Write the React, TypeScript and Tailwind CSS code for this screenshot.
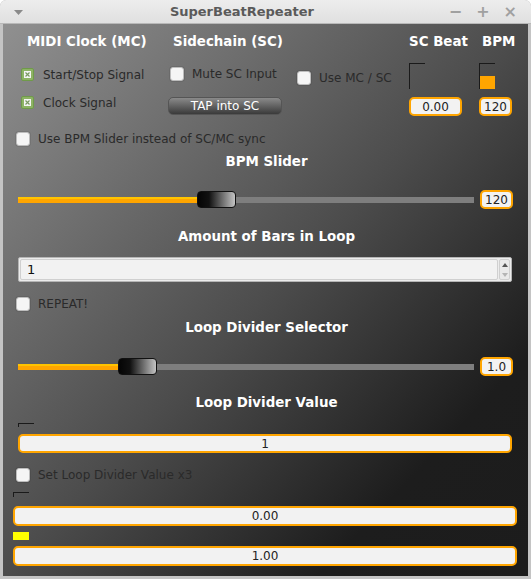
import React from "react";

const font = { fontFamily: '"DejaVu Sans", Verdana, sans-serif' };

function CheckedBox() {
  return (
    <div className="w-[13px] h-[13px] rounded-[2px] bg-[#8db364] border border-[#6f9a4a] flex items-center justify-center shrink-0">
      <div className="w-[7px] h-[7px] bg-[#f4f4f4] flex items-center justify-center">
        <svg width="5" height="5" viewBox="0 0 5 5">
          <path d="M0.5 0.5 L4.5 4.5 M4.5 0.5 L0.5 4.5" stroke="#7a9a60" strokeWidth="1.2" />
        </svg>
      </div>
    </div>
  );
}

function EmptyBox() {
  return (
    <div className="w-[14px] h-[14px] rounded-[3px] bg-[#f5f5f5] border border-[#bdbdbd] shadow-[0_0_0_1px_rgba(0,0,0,0.08)] shrink-0" />
  );
}

function Header({ children, className = "" }: { children: React.ReactNode; className?: string }) {
  return (
    <div className={"text-white font-bold text-[13.4px] leading-[16px] whitespace-nowrap " + className}>{children}</div>
  );
}

function ValueBox({ children, className = "" }: { children: React.ReactNode; className?: string }) {
  return (
    <div
      className={
        "border-2 border-[#ffa500] rounded-[5px] bg-[#f2f2f2] flex items-center justify-center text-[12px] text-[#222] shrink-0 " +
        className
      }
    >
      {children}
    </div>
  );
}

function Slider({ fill }: { fill: number }) {
  return (
    <div className="relative w-[456px] h-[19px] flex items-center shrink-0">
      <div className="w-full h-[6px] bg-[#7e7e7e] flex">
        <div className="h-[6px] flex flex-col" style={{ width: fill }}>
          <div className="h-[2px] bg-[#ffc400]" />
          <div className="h-[4px] bg-[#ffa500]" />
        </div>
      </div>
      <div
        className="absolute top-[1px] w-[39px] h-[17px] rounded-[4px] bg-[linear-gradient(to_right,#050505_0%,#111_30%,#c4c4c4_100%)] border border-[#111]"
        style={{ left: fill - 1 }}
      />
    </div>
  );
}

export default function App() {
  return (
    <div className="w-[531px] h-[579px] bg-[#c4c4c4] rounded-t-[6px] flex flex-col px-[3px] pb-[3px] overflow-hidden" style={font}>
      {/* Title bar */}
      <div className="h-[24px] shrink-0 bg-[linear-gradient(#ededed,#e0e0e0)] -mx-[3px] px-[14px] flex items-center rounded-t-[6px] border-b border-[#b8b8b8]">
        <svg width="9" height="5" viewBox="0 0 9 5" className="mt-[1px]">
          <path d="M0 0 H9 L4.5 5 Z" fill="#8a8a8a" />
        </svg>
        <div className="flex-1 text-center text-[13px] font-bold text-[#5a5a5a] pl-[12px]">SuperBeatRepeater</div>
        <div className="flex items-center gap-[14px] text-[#a0a0a0] font-bold text-[16px] leading-none">
          <span>−</span>
          <span>+</span>
          <span>×</span>
        </div>
      </div>

      {/* Content */}
      <div className="flex-1 min-h-0 bg-[linear-gradient(to_bottom_right,#909090_0%,#4c4c4c_50%,#1d1d1d_80%,#1c1c1c_100%)] flex flex-col text-[12px] text-[#2a2a2a]">
        {/* Top area */}
        <div className="flex pt-[10px] shrink-0">
          {/* Col A */}
          <div className="w-[165px] flex flex-col">
            <Header className="ml-[24px]">MIDI Clock (MC)</Header>
            <div className="flex items-center ml-[18px] mt-[18px] h-[13px]">
              <CheckedBox />
              <span className="ml-[9px] leading-[14px]">Start/Stop Signal</span>
            </div>
            <div className="flex items-center ml-[18px] mt-[15px] h-[13px]">
              <CheckedBox />
              <span className="ml-[9px] leading-[14px]">Clock Signal</span>
            </div>
          </div>
          {/* Col B */}
          <div className="w-[129px] flex flex-col">
            <Header className="ml-[5px]">Sidechain (SC)</Header>
            <div className="flex items-center ml-[2px] mt-[17px] h-[14px]">
              <EmptyBox />
              <span className="ml-[8px] leading-[14px]">Mute SC Input</span>
            </div>
            <div className="mt-[16px] w-[114px] h-[18px] rounded-[5px] bg-[linear-gradient(#8a8a8a,#3a3a3a)] border border-[#555] flex items-center justify-center text-white text-[12px]">
              TAP into SC
            </div>
          </div>
          {/* Col C */}
          <div className="w-[112px] flex flex-col">
            <div className="flex items-center mt-[37px] h-[14px]">
              <EmptyBox />
              <span className="ml-[8px] leading-[14px]">Use MC / SC</span>
            </div>
          </div>
          {/* Col D */}
          <div className="w-[70px] flex flex-col">
            <Header className="ml-[0px]">SC Beat</Header>
            <div className="mt-[13px] w-[16px] h-[26px] border-t border-l border-[#1a1a1a]" />
            <ValueBox className="mt-[8px] w-[53px] h-[19px]">0.00</ValueBox>
          </div>
          {/* Col E */}
          <div className="flex flex-col">
            <Header className="ml-[3px]">BPM</Header>
            <div className="mt-[13px] w-[16px] h-[26px] border-t border-l border-[#1a1a1a] flex flex-col justify-end">
              <div className="h-[13px] w-[15px] bg-[#ffa500]" />
            </div>
            <ValueBox className="mt-[8px] w-[33px] h-[19px]">120</ValueBox>
          </div>
        </div>

        {/* Use BPM slider */}
        <div className="flex items-center ml-[13px] mt-[16px] h-[14px] shrink-0">
          <EmptyBox />
          <span className="ml-[8px] leading-[14px]">Use BPM Slider instead of SC/MC sync</span>
        </div>

        <Header className="text-center mt-[8px] pl-[2px]">BPM Slider</Header>

        <div className="flex items-center ml-[15px] mt-[20px] shrink-0">
          <Slider fill={180} />
          <ValueBox className="ml-[6px] w-[33px] h-[19px]">120</ValueBox>
        </div>

        <Header className="text-center mt-[20px] pl-[2px]">Amount of Bars in Loop</Header>

        <div className="ml-[15px] mr-[16px] mt-[12px] h-[25px] shrink-0 border border-[#b5b5b5] bg-[#ececec] p-[1px] flex rounded-[2px]">
          <div className="flex-1 rounded-[2px] bg-[#f2f2f2] border border-[#d0d0d0] flex items-center pl-[6px] text-[13px] text-[#111]">1</div>
          <div className="w-[11px] flex flex-col items-center justify-center gap-[6px] border border-[#d0d0d0] rounded-[2px] ml-[1px] bg-[#eaeaea]">
            <svg width="6" height="4" viewBox="0 0 6 4"><path d="M0 4 L3 0 L6 4 Z" fill="#555" /></svg>
            <svg width="6" height="4" viewBox="0 0 6 4"><path d="M0 0 L3 4 L6 0 Z" fill="#b5b5b5" /></svg>
          </div>
        </div>

        {/* REPEAT */}
        <div className="flex items-center ml-[13px] mt-[15px] h-[14px] shrink-0">
          <EmptyBox />
          <span className="ml-[8px] leading-[14px]">REPEAT!</span>
        </div>

        <Header className="text-center mt-[9px] pl-[2px]">Loop Divider Selector</Header>

        <div className="flex items-center ml-[15px] mt-[21px] shrink-0">
          <Slider fill={101} />
          <ValueBox className="ml-[6px] w-[33px] h-[19px]">1.0</ValueBox>
        </div>

        <Header className="text-center mt-[19px] pl-[2px]">Loop Divider Value</Header>

        <div className="ml-[15px] mt-[12px] w-[16px] h-[4px] shrink-0 border-t border-l border-[#1a1a1a]" />
        <ValueBox className="ml-[15px] mr-[16px] mt-[7px] h-[19px]">1</ValueBox>

        {/* Set loop divider x3 */}
        <div className="flex items-center ml-[13px] mt-[15px] h-[14px] shrink-0">
          <EmptyBox />
          <span className="ml-[8px] leading-[14px]">Set Loop Divider Value x3</span>
        </div>

        <div className="ml-[10px] mt-[10px] w-[16px] h-[5px] shrink-0 border-t border-l border-[#1a1a1a]" />
        <ValueBox className="ml-[10px] mr-[11px] mt-[9px] h-[20px]">0.00</ValueBox>
        <div className="ml-[10px] mt-[6px] w-[16px] h-[8px] shrink-0 bg-[#ffff00]" />
        <ValueBox className="ml-[10px] mr-[11px] mt-[6px] h-[20px]">1.00</ValueBox>
      </div>
    </div>
  );
}
